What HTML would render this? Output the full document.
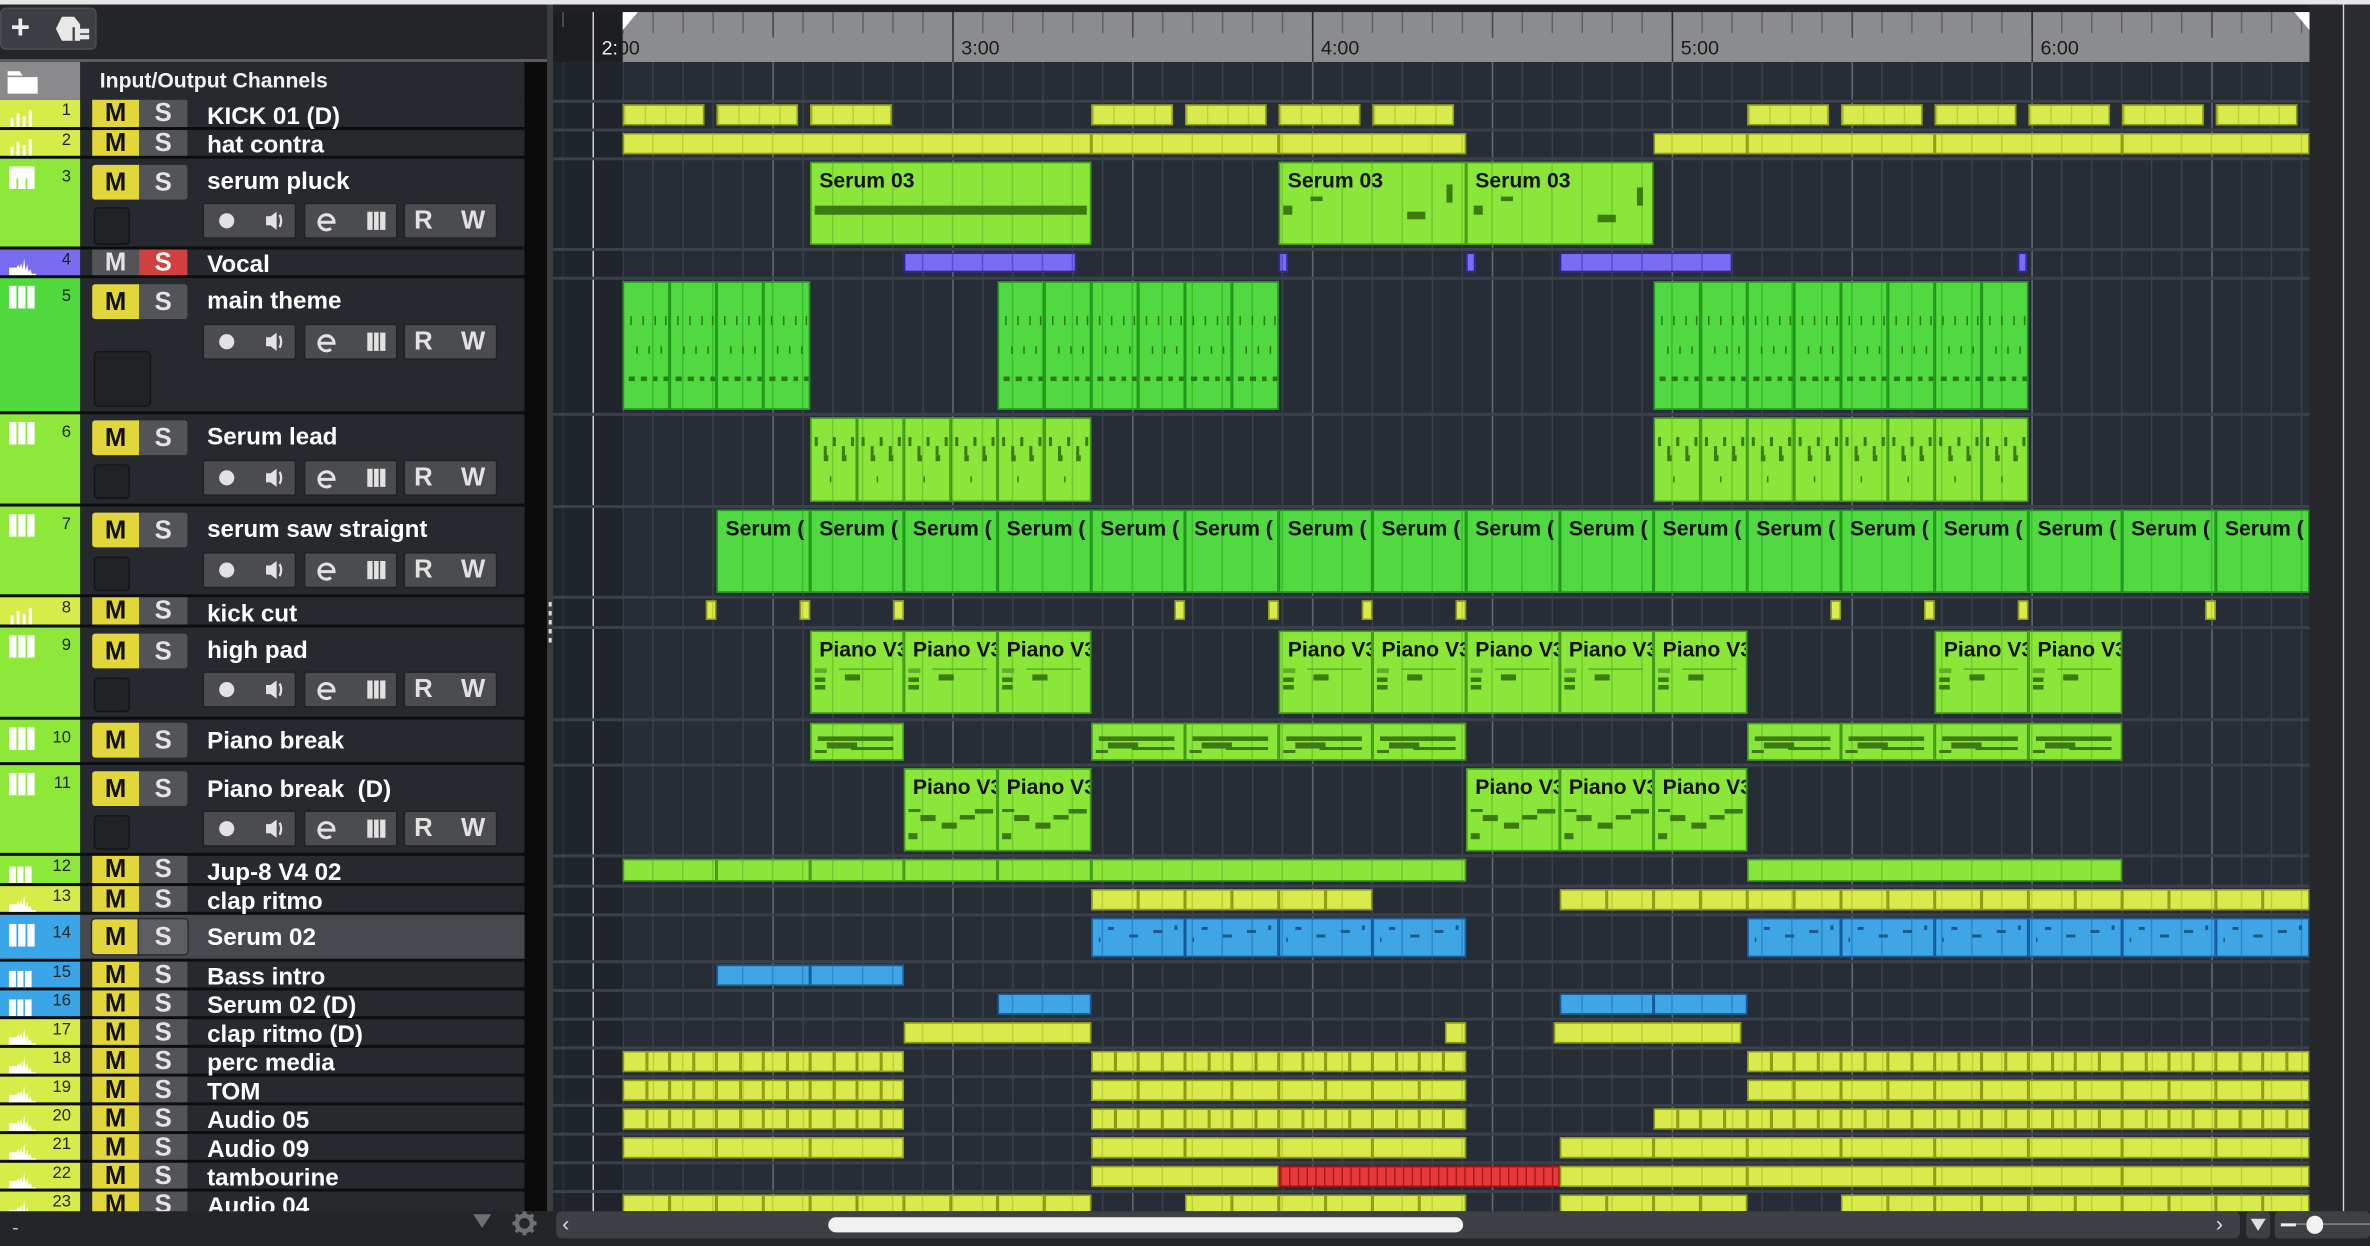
<!DOCTYPE html>
<html><head><meta charset="utf-8">
<style>
body{margin:0;width:2370px;height:1246px;overflow:hidden;background:#1e2023}
#app{position:absolute;left:0;top:0;width:1568px;height:824px;transform:scale(1.51148,1.51214);transform-origin:0 0;font-family:"Liberation Sans",sans-serif;background:#222428;overflow:hidden}
.a{position:absolute}
.r{position:absolute;left:0;width:347px;background:#26292d;border-bottom:2px solid #0c0d0f;box-sizing:border-box}
.st{position:absolute;left:0;top:0;bottom:0;width:53px}
.yl{background:#d6ec48}.lm{background:#8ee83a}.gr{background:#4fd93d}.pu{background:#7a6cf0}.bl{background:#3ba6e7}
.n{position:absolute;right:300px;top:1px;font-size:11px;color:#222;width:20px;text-align:right}
.M,.S{position:absolute;top:0;bottom:0;font-weight:bold;font-size:17px;text-align:center;display:flex;align-items:center;justify-content:center}
.M{left:61px;width:31px;background:#e3d63a;color:#111}
.S{left:92px;width:32px;background:#525458;color:#e4e4e4}
.M.off{background:#525458;color:#e4e4e4}.S.red{background:#d04040;color:#fff}
.big .M,.big .S{top:4px;bottom:auto;height:23px}
.big .M{border-radius:2px 0 0 2px}.big .S{border-radius:0 2px 2px 0}
.nm{position:absolute;left:137px;top:2px;font-weight:bold;font-size:16px;color:#fff;white-space:nowrap}
.g{position:absolute;height:24px;width:62px;background:#4a4c50;border-radius:2px;border:1px solid #1f2124;box-sizing:border-box}
.g b,.g svg{position:absolute;top:0}
.g b{font-size:17px;color:#e2e2e2;line-height:22px}
.bx{position:absolute;left:62px;width:24px;border:1.5px solid #131416;border-radius:3px;background:#202226;box-sizing:border-box}
.ic{position:absolute;left:6px}
.c{position:absolute;box-sizing:border-box;border:1.3px solid;overflow:hidden;background-size:19.833px 100%}
.y{background-color:#d8ea4c;border-color:#8e9a14;background-image:linear-gradient(90deg,#bfd034 0 1px,transparent 1px)}
.k{background-size:13.5px 100%!important}
.l{background-color:#8be63a;border-color:#3e9a18;background-image:linear-gradient(90deg,#72c82c 0 1px,transparent 1px)}
.G{background-color:#50d940;border-color:#1f961c;background-image:linear-gradient(90deg,#3abb30 0 1px,transparent 1px)}
.B{background-color:#3fa6e6;border-color:#18589a;background-image:linear-gradient(90deg,#2a88cc 0 1px,transparent 1px)}
.P{background-color:#7b6cf0;border-color:#2e22a8;background-image:linear-gradient(90deg,#5a4bd0 0 1px,transparent 1px)}
.Rd{background-color:#e8393a;border-color:#9c1212;background-image:linear-gradient(90deg,#a81818 0 1px,transparent 1px)!important;background-size:5.8px 100%!important}
.t{font-weight:bold;font-size:14px;color:#111;white-space:nowrap;padding:4px 0 0 5px;line-height:14px}
.d{position:absolute;background:#3d7a12}
</style></head><body><div id="app">
<div class="a" style="left:0;top:0;width:1568px;height:3px;background:#e6e6e6"></div>
<div class="a" style="left:0;top:3px;width:362px;height:38px;background:#232529"></div>
<div class="a" style="left:0;top:5px;width:64px;height:28px;background:#3b3e43;border:1px solid #4b4e53;border-radius:4px;box-sizing:border-box"></div>
<div class="a" style="left:7px;top:7px;font-size:22px;font-weight:bold;color:#eee;line-height:22px">+</div>
<svg class="a" style="left:37px;top:11px" width="24" height="16" viewBox="0 0 24 16"><path d="M4 0h8l4 5v11H4L0 8z" fill="#e8e8e8"/><rect x="12" y="8" width="10" height="3" fill="#e8e8e8"/><rect x="12" y="12" width="10" height="3" fill="#e8e8e8"/><rect x="11" y="7" width="1.5" height="9" fill="#3b3e43"/></svg>
<div class="a" style="left:0;top:39px;width:362px;height:2px;background:#5a5c60"></div>
<div class="a" style="left:0;top:41px;width:347px;height:25px;background:#26292d;border-bottom:1px solid #0c0d0f"></div>
<div class="a" style="left:0;top:41px;width:53px;height:25px;background:#8a8a8c"></div>
<svg class="a" style="left:5px;top:47px" width="20" height="15"><path d="M0 0h8l2 3h-10z M0 4h20v11H0z" fill="#fff"/></svg>
<div class="a" style="left:66px;top:45px;font-size:14px;font-weight:bold;color:#f2f2f2">Input/Output Channels</div>
<div class="a" style="left:347px;top:41px;width:15px;height:760px;background:#0b0b0c"></div>
<div class="a" style="left:362px;top:3px;width:4px;height:800px;background:#3a3d42"></div>
<div class="a" style="left:363px;top:398px;width:2px;height:28px;background:repeating-linear-gradient(#ddd 0 3px,transparent 3px 6px)"></div>

<div class="r" style="top:66px;height:20px"><div class="st yl"></div><span class="n">1</span><svg class="ic" style="top:6px" width="17" height="12"><path d="M1 6h2v6H1zM5 3h2v9H5zM9 5h2v7H9zM13 1h2v11h-2z" fill="#fff"/></svg><div class="M">M</div><div class="S">S</div><div class="nm" style="top:3px">KICK 01 (D)</div></div>
<div class="r" style="top:86px;height:19px"><div class="st yl"></div><span class="n">2</span><svg class="ic" style="top:5px" width="17" height="12"><path d="M1 6h2v6H1zM5 3h2v9H5zM9 5h2v7H9zM13 1h2v11h-2z" fill="#fff"/></svg><div class="M">M</div><div class="S">S</div><div class="nm">hat contra</div></div>
<div class="r big" style="top:105px;height:60px"><div class="st lm"></div><span class="n" style="top:6px">3</span><svg class="ic" style="top:5px" width="17" height="15"><path d="M0 0h17v15H0z" fill="#fff"/><path d="M5.5 0v15M11.5 0v15" stroke="#8ee83a" stroke-width="1.2"/><path d="M4 0h3v8H4zM10 0h3v8h-3z" fill="#fff"/></svg><div class="M">M</div><div class="S">S</div><div class="nm" style="top:7px">serum pluck</div>
<div class="bx" style="top:32px;height:25px"></div>
<div class="g" style="left:134px;top:29px"><svg width="62" height="22"><circle cx="15" cy="11" r="5" fill="#e2e2e2"/><path d="M41 8h3l4-3v12l-4-3h-3z" fill="#e2e2e2"/><path d="M50 7q2 4 0 8" stroke="#e2e2e2" stroke-width="1.5" fill="none"/></svg></div>
<div class="g" style="left:201px;top:29px"><svg width="62" height="22"><path d="M9 12h10a5 5 0 1 0-2 4" stroke="#e2e2e2" stroke-width="2" fill="none"/><path d="M41 5h12v12H41z" fill="#e2e2e2"/><path d="M45 5v12M49 5v12" stroke="#4a4c50"/></svg></div>
<div class="g" style="left:267px;top:29px"><b style="left:6px">R</b><b style="left:37px">W</b></div></div>
<div class="r" style="top:165px;height:19px"><div class="st pu"></div><span class="n">4</span><svg class="ic" style="top:5px" width="18" height="12"><path d="M0 12h18v-1h-3l-1-3-1 2-1-5-1 4-1-8-1 7-1-4-1 3-1-2-1 2H0z" fill="#fff"/></svg><div class="M off">M</div><div class="S red">S</div><div class="nm">Vocal</div></div>
<div class="r big" style="top:184px;height:90px"><div class="st gr"></div><span class="n" style="top:6px">5</span><svg class="ic" style="top:5px" width="17" height="15"><path d="M0 0h17v15H0z" fill="#fff"/><path d="M5.5 0v15M11.5 0v15" stroke="#4fd93d" stroke-width="1.2"/></svg><div class="M">M</div><div class="S">S</div><div class="nm" style="top:7px">main theme</div>
<div class="bx" style="top:48px;height:37px;width:38px"></div>
<div class="g" style="left:134px;top:30px"><svg width="62" height="22"><circle cx="15" cy="11" r="5" fill="#e2e2e2"/><path d="M41 8h3l4-3v12l-4-3h-3z" fill="#e2e2e2"/><path d="M50 7q2 4 0 8" stroke="#e2e2e2" stroke-width="1.5" fill="none"/></svg></div>
<div class="g" style="left:201px;top:30px"><svg width="62" height="22"><path d="M9 12h10a5 5 0 1 0-2 4" stroke="#e2e2e2" stroke-width="2" fill="none"/><path d="M41 5h12v12H41z" fill="#e2e2e2"/><path d="M45 5v12M49 5v12" stroke="#4a4c50"/></svg></div>
<div class="g" style="left:267px;top:30px"><b style="left:6px">R</b><b style="left:37px">W</b></div></div>
<div class="r big" style="top:274px;height:61px"><div class="st lm"></div><span class="n" style="top:6px">6</span><svg class="ic" style="top:5px" width="17" height="15"><path d="M0 0h17v15H0z" fill="#fff"/><path d="M5.5 0v15M11.5 0v15" stroke="#8ee83a" stroke-width="1.2"/></svg><div class="M">M</div><div class="S">S</div><div class="nm" style="top:7px">Serum lead</div>
<div class="bx" style="top:33px;height:23px"></div>
<div class="g" style="left:134px;top:30px"><svg width="62" height="22"><circle cx="15" cy="11" r="5" fill="#e2e2e2"/><path d="M41 8h3l4-3v12l-4-3h-3z" fill="#e2e2e2"/><path d="M50 7q2 4 0 8" stroke="#e2e2e2" stroke-width="1.5" fill="none"/></svg></div>
<div class="g" style="left:201px;top:30px"><svg width="62" height="22"><path d="M9 12h10a5 5 0 1 0-2 4" stroke="#e2e2e2" stroke-width="2" fill="none"/><path d="M41 5h12v12H41z" fill="#e2e2e2"/><path d="M45 5v12M49 5v12" stroke="#4a4c50"/></svg></div>
<div class="g" style="left:267px;top:30px"><b style="left:6px">R</b><b style="left:37px">W</b></div></div>
<div class="r big" style="top:335px;height:60px"><div class="st lm"></div><span class="n" style="top:6px">7</span><svg class="ic" style="top:5px" width="17" height="15"><path d="M0 0h17v15H0z" fill="#fff"/><path d="M5.5 0v15M11.5 0v15" stroke="#8ee83a" stroke-width="1.2"/></svg><div class="M">M</div><div class="S">S</div><div class="nm" style="top:7px">serum saw straignt</div>
<div class="bx" style="top:33px;height:23px"></div>
<div class="g" style="left:134px;top:30px"><svg width="62" height="22"><circle cx="15" cy="11" r="5" fill="#e2e2e2"/><path d="M41 8h3l4-3v12l-4-3h-3z" fill="#e2e2e2"/><path d="M50 7q2 4 0 8" stroke="#e2e2e2" stroke-width="1.5" fill="none"/></svg></div>
<div class="g" style="left:201px;top:30px"><svg width="62" height="22"><path d="M9 12h10a5 5 0 1 0-2 4" stroke="#e2e2e2" stroke-width="2" fill="none"/><path d="M41 5h12v12H41z" fill="#e2e2e2"/><path d="M45 5v12M49 5v12" stroke="#4a4c50"/></svg></div>
<div class="g" style="left:267px;top:30px"><b style="left:6px">R</b><b style="left:37px">W</b></div></div>
<div class="r" style="top:395px;height:20px"><div class="st yl"></div><span class="n">8</span><svg class="ic" style="top:6px" width="17" height="12"><path d="M1 6h2v6H1zM5 3h2v9H5zM9 5h2v7H9zM13 1h2v11h-2z" fill="#fff"/></svg><div class="M">M</div><div class="S">S</div><div class="nm" style="top:3px">kick cut</div></div>
<div class="r big" style="top:415px;height:61px"><div class="st lm"></div><span class="n" style="top:6px">9</span><svg class="ic" style="top:5px" width="17" height="15"><path d="M0 0h17v15H0z" fill="#fff"/><path d="M5.5 0v15M11.5 0v15" stroke="#8ee83a" stroke-width="1.2"/></svg><div class="M">M</div><div class="S">S</div><div class="nm" style="top:7px">high pad</div>
<div class="bx" style="top:33px;height:23px"></div>
<div class="g" style="left:134px;top:29px"><svg width="62" height="22"><circle cx="15" cy="11" r="5" fill="#e2e2e2"/><path d="M41 8h3l4-3v12l-4-3h-3z" fill="#e2e2e2"/><path d="M50 7q2 4 0 8" stroke="#e2e2e2" stroke-width="1.5" fill="none"/></svg></div>
<div class="g" style="left:201px;top:29px"><svg width="62" height="22"><path d="M9 12h10a5 5 0 1 0-2 4" stroke="#e2e2e2" stroke-width="2" fill="none"/><path d="M41 5h12v12H41z" fill="#e2e2e2"/><path d="M45 5v12M49 5v12" stroke="#4a4c50"/></svg></div>
<div class="g" style="left:267px;top:29px"><b style="left:6px">R</b><b style="left:37px">W</b></div></div>
<div class="r big" style="top:476px;height:30px"><div class="st lm"></div><span class="n" style="top:6px">10</span><svg class="ic" style="top:5px" width="17" height="15"><path d="M0 0h17v15H0z" fill="#fff"/><path d="M5.5 0v15M11.5 0v15" stroke="#8ee83a" stroke-width="1.2"/></svg><div class="M" style="top:2px">M</div><div class="S" style="top:2px">S</div><div class="nm" style="top:6px">Piano break</div></div>
<div class="r big" style="top:506px;height:60px"><div class="st lm"></div><span class="n" style="top:6px">11</span><svg class="ic" style="top:5px" width="17" height="15"><path d="M0 0h17v15H0z" fill="#fff"/><path d="M5.5 0v15M11.5 0v15" stroke="#8ee83a" stroke-width="1.2"/></svg><div class="M">M</div><div class="S">S</div><div class="nm" style="top:8px">Piano break&nbsp; (D)</div>
<div class="bx" style="top:33px;height:23px"></div>
<div class="g" style="left:134px;top:30px"><svg width="62" height="22"><circle cx="15" cy="11" r="5" fill="#e2e2e2"/><path d="M41 8h3l4-3v12l-4-3h-3z" fill="#e2e2e2"/><path d="M50 7q2 4 0 8" stroke="#e2e2e2" stroke-width="1.5" fill="none"/></svg></div>
<div class="g" style="left:201px;top:30px"><svg width="62" height="22"><path d="M9 12h10a5 5 0 1 0-2 4" stroke="#e2e2e2" stroke-width="2" fill="none"/><path d="M41 5h12v12H41z" fill="#e2e2e2"/><path d="M45 5v12M49 5v12" stroke="#4a4c50"/></svg></div>
<div class="g" style="left:267px;top:30px"><b style="left:6px">R</b><b style="left:37px">W</b></div></div>
<div class="r" style="top:566px;height:20px"><div class="st lm"></div><span class="n">12</span><svg class="ic" style="top:7px" width="15" height="11"><path d="M0 0h15v11H0z" fill="#fff"/><path d="M5 0v11M10 0v11" stroke="#8ee83a"/></svg><div class="M">M</div><div class="S">S</div><div class="nm" style="top:3px">Jup-8 V4 02</div></div>
<div class="r" style="top:586px;height:19px"><div class="st yl"></div><span class="n">13</span><svg class="ic" style="top:5px" width="18" height="12"><path d="M0 12h18v-1h-3l-1-3-1 2-1-5-1 4-1-8-1 7-1-4-1 3-1-2-1 2H0z" fill="#fff"/></svg><div class="M">M</div><div class="S">S</div><div class="nm">clap ritmo</div></div>
<div class="r big" style="top:605px;height:31px;background:#46494e"><div class="st bl"></div><span class="n" style="top:6px">14</span><svg class="ic" style="top:6px" width="17" height="15"><path d="M0 0h17v15H0z" fill="#fff"/><path d="M5.5 0v15M11.5 0v15" stroke="#3ba6e7" stroke-width="1.2"/></svg><div class="M" style="top:3px;box-shadow:0 0 0 1px #2a2c30">M</div><div class="S" style="top:3px;background:#5c5e62;box-shadow:0 0 0 1px #2a2c30">S</div><div class="nm" style="top:7px">Serum 02</div></div>
<div class="r" style="top:636px;height:19px"><div class="st bl"></div><span class="n">15</span><svg class="ic" style="top:6px" width="15" height="11"><path d="M0 0h15v11H0z" fill="#fff"/><path d="M5 0v11M10 0v11" stroke="#3ba6e7"/></svg><div class="M">M</div><div class="S">S</div><div class="nm">Bass intro</div></div>
<div class="r" style="top:655px;height:19px"><div class="st bl"></div><span class="n">16</span><svg class="ic" style="top:6px" width="15" height="11"><path d="M0 0h15v11H0z" fill="#fff"/><path d="M5 0v11M10 0v11" stroke="#3ba6e7"/></svg><div class="M">M</div><div class="S">S</div><div class="nm">Serum 02 (D)</div></div>
<div class="r" style="top:674px;height:19px"><div class="st yl"></div><span class="n">17</span><svg class="ic" style="top:5px" width="18" height="12"><path d="M0 12h18v-1h-3l-1-3-1 2-1-5-1 4-1-8-1 7-1-4-1 3-1-2-1 2H0z" fill="#fff"/></svg><div class="M">M</div><div class="S">S</div><div class="nm">clap ritmo (D)</div></div>
<div class="r" style="top:693px;height:19px"><div class="st yl"></div><span class="n">18</span><svg class="ic" style="top:5px" width="18" height="12"><path d="M0 12h18v-1h-3l-1-3-1 2-1-5-1 4-1-8-1 7-1-4-1 3-1-2-1 2H0z" fill="#fff"/></svg><div class="M">M</div><div class="S">S</div><div class="nm">perc media</div></div>
<div class="r" style="top:712px;height:19px"><div class="st yl"></div><span class="n">19</span><svg class="ic" style="top:5px" width="18" height="12"><path d="M0 12h18v-1h-3l-1-3-1 2-1-5-1 4-1-8-1 7-1-4-1 3-1-2-1 2H0z" fill="#fff"/></svg><div class="M">M</div><div class="S">S</div><div class="nm">TOM</div></div>
<div class="r" style="top:731px;height:19px"><div class="st yl"></div><span class="n">20</span><svg class="ic" style="top:5px" width="18" height="12"><path d="M0 12h18v-1h-3l-1-3-1 2-1-5-1 4-1-8-1 7-1-4-1 3-1-2-1 2H0z" fill="#fff"/></svg><div class="M">M</div><div class="S">S</div><div class="nm">Audio 05</div></div>
<div class="r" style="top:750px;height:19px"><div class="st yl"></div><span class="n">21</span><svg class="ic" style="top:5px" width="18" height="12"><path d="M0 12h18v-1h-3l-1-3-1 2-1-5-1 4-1-8-1 7-1-4-1 3-1-2-1 2H0z" fill="#fff"/></svg><div class="M">M</div><div class="S">S</div><div class="nm">Audio 09</div></div>
<div class="r" style="top:769px;height:19px"><div class="st yl"></div><span class="n">22</span><svg class="ic" style="top:5px" width="18" height="12"><path d="M0 12h18v-1h-3l-1-3-1 2-1-5-1 4-1-8-1 7-1-4-1 3-1-2-1 2H0z" fill="#fff"/></svg><div class="M">M</div><div class="S">S</div><div class="nm">tambourine</div></div>
<div class="r" style="top:788px;height:19px"><div class="st yl"></div><span class="n">23</span><svg class="ic" style="top:5px" width="18" height="12"><path d="M0 12h18v-1h-3l-1-3-1 2-1-5-1 4-1-8-1 7-1-4-1 3-1-2-1 2H0z" fill="#fff"/></svg><div class="M">M</div><div class="S">S</div><div class="nm">Audio 04</div></div>

<div class="a" style="left:366px;top:3px;width:1162px;height:5px;background:#1f2125"></div>
<div class="a" style="left:366px;top:8px;width:46px;height:33px;background:#1c1e22"></div>
<div class="a" style="left:412px;top:8px;width:1116px;height:33px;background:#8b8c8f;background-image:linear-gradient(90deg,#606165 0 1px,transparent 1px);background-size:19.833px 14px;background-repeat:repeat-x;background-position:19.67px 0"></div>
<div class="a" style="left:412px;top:8px;width:0;height:0;border-top:12px solid #fff;border-right:10px solid transparent"></div>
<div class="a" style="left:1518px;top:8px;width:0;height:0;border-top:12px solid #fff;border-left:10px solid transparent"></div>
<div class="a" style="left:630px;top:8px;width:1px;height:33px;background:#2c2d30"></div>
<div class="a" style="left:868px;top:8px;width:1px;height:33px;background:#2c2d30"></div>
<div class="a" style="left:1106px;top:8px;width:1px;height:33px;background:#2c2d30"></div>
<div class="a" style="left:1344px;top:8px;width:1px;height:33px;background:#2c2d30"></div>
<div class="a" style="left:511px;top:8px;width:1px;height:17px;background:#4a4b4e"></div>
<div class="a" style="left:749px;top:8px;width:1px;height:17px;background:#4a4b4e"></div>
<div class="a" style="left:987px;top:8px;width:1px;height:17px;background:#4a4b4e"></div>
<div class="a" style="left:1225px;top:8px;width:1px;height:17px;background:#4a4b4e"></div>
<div class="a" style="left:1463px;top:8px;width:1px;height:17px;background:#4a4b4e"></div>
<div class="a" style="left:372px;top:8px;width:1px;height:10px;background:#55575b"></div>
<div class="a" style="left:398px;top:24px;font-size:13px;color:#1a1a1a"><span style="color:#eee">2:</span>00</div>
<div class="a" style="left:636px;top:24px;font-size:13px;color:#1a1a1a">3:00</div>
<div class="a" style="left:874px;top:24px;font-size:13px;color:#1a1a1a">4:00</div>
<div class="a" style="left:1112px;top:24px;font-size:13px;color:#1a1a1a">5:00</div>
<div class="a" style="left:1350px;top:24px;font-size:13px;color:#1a1a1a">6:00</div>
<div class="a" style="left:1528px;top:3px;width:22px;height:798px;background:#25272b"></div>
<div class="a" style="left:1550px;top:3px;width:1.3px;height:798px;background:#d8d8d8"></div>
<div class="a" style="left:1551px;top:3px;width:17px;height:798px;background:#2a2c30"></div>
<div id="grid" class="a" style="left:366px;top:41px;width:1162px;height:760px;background-color:#272d37;background-image:linear-gradient(90deg,#62666d 0 1px,transparent 1px),linear-gradient(90deg,#3a404a 0 1px,transparent 1px);background-size:119px 100%,19.833px 100%;background-position:26px 0,6.17px 0"></div>
<div class="a" style="left:366px;top:41px;width:46px;height:760px;background:rgba(20,22,25,.35)"></div>
<div class="a" style="left:391.5px;top:8px;width:1.2px;height:793px;background:#cfcfcf"></div>
<div id="L" class="a" style="left:0;top:0;width:1528px;height:801px;overflow:hidden">
<div class="c l" style="left:536px;top:107px;width:186px;height:55px"><div class="t">Serum 03</div><i class="d" style="left:2px;top:28px;width:180px;height:6px"></i></div>
<div class="c l" style="left:846px;top:107px;width:124px;height:55px"><div class="t">Serum 03</div><i class="d" style="left:2px;top:28px;width:6px;height:6px"></i><i class="d" style="left:20px;top:22px;width:8px;height:3px"></i><i class="d" style="left:84px;top:32px;width:12px;height:5px"></i><i class="d" style="left:110px;top:14px;width:4px;height:12px"></i></div>
<div class="c l" style="left:970px;top:107px;width:124px;height:55px"><div class="t">Serum 03</div><i class="d" style="left:4px;top:28px;width:6px;height:6px"></i><i class="d" style="left:22px;top:22px;width:8px;height:3px"></i><i class="d" style="left:86px;top:34px;width:12px;height:5px"></i><i class="d" style="left:112px;top:16px;width:4px;height:12px"></i></div>
<div class="c G" style="left:474px;top:337px;width:62px;height:55px"><div class="t">Serum (</div></div>
<div class="c G" style="left:536px;top:337px;width:62px;height:55px"><div class="t">Serum (</div></div>
<div class="c G" style="left:598px;top:337px;width:62px;height:55px"><div class="t">Serum (</div></div>
<div class="c G" style="left:660px;top:337px;width:62px;height:55px"><div class="t">Serum (</div></div>
<div class="c G" style="left:722px;top:337px;width:62px;height:55px"><div class="t">Serum (</div></div>
<div class="c G" style="left:784px;top:337px;width:62px;height:55px"><div class="t">Serum (</div></div>
<div class="c G" style="left:846px;top:337px;width:62px;height:55px"><div class="t">Serum (</div></div>
<div class="c G" style="left:908px;top:337px;width:62px;height:55px"><div class="t">Serum (</div></div>
<div class="c G" style="left:970px;top:337px;width:62px;height:55px"><div class="t">Serum (</div></div>
<div class="c G" style="left:1032px;top:337px;width:62px;height:55px"><div class="t">Serum (</div></div>
<div class="c G" style="left:1094px;top:337px;width:62px;height:55px"><div class="t">Serum (</div></div>
<div class="c G" style="left:1156px;top:337px;width:62px;height:55px"><div class="t">Serum (</div></div>
<div class="c G" style="left:1218px;top:337px;width:62px;height:55px"><div class="t">Serum (</div></div>
<div class="c G" style="left:1280px;top:337px;width:62px;height:55px"><div class="t">Serum (</div></div>
<div class="c G" style="left:1342px;top:337px;width:62px;height:55px"><div class="t">Serum (</div></div>
<div class="c G" style="left:1404px;top:337px;width:62px;height:55px"><div class="t">Serum (</div></div>
<div class="c G" style="left:1466px;top:337px;width:62px;height:55px"><div class="t">Serum (</div></div>
<div class="c l pv" style="left:536px;top:417px;width:62px;height:55px"><div class="t">Piano V3</div></div>
<div class="c l pv" style="left:598px;top:417px;width:62px;height:55px"><div class="t">Piano V3</div></div>
<div class="c l pv" style="left:660px;top:417px;width:62px;height:55px"><div class="t">Piano V3</div></div>
<div class="c l pv" style="left:846px;top:417px;width:62px;height:55px"><div class="t">Piano V3</div></div>
<div class="c l pv" style="left:908px;top:417px;width:62px;height:55px"><div class="t">Piano V3</div></div>
<div class="c l pv" style="left:970px;top:417px;width:62px;height:55px"><div class="t">Piano V3</div></div>
<div class="c l pv" style="left:1032px;top:417px;width:62px;height:55px"><div class="t">Piano V3</div></div>
<div class="c l pv" style="left:1094px;top:417px;width:62px;height:55px"><div class="t">Piano V3</div></div>
<div class="c l pv" style="left:1280px;top:417px;width:62px;height:55px"><div class="t">Piano V3</div></div>
<div class="c l pv" style="left:1342px;top:417px;width:62px;height:55px"><div class="t">Piano V3</div></div>
<div class="c l pw" style="left:598px;top:508px;width:62px;height:55px"><div class="t">Piano V3</div></div>
<div class="c l pw" style="left:660px;top:508px;width:62px;height:55px"><div class="t">Piano V3</div></div>
<div class="c l pw" style="left:970px;top:508px;width:62px;height:55px"><div class="t">Piano V3</div></div>
<div class="c l pw" style="left:1032px;top:508px;width:62px;height:55px"><div class="t">Piano V3</div></div>
<div class="c l pw" style="left:1094px;top:508px;width:62px;height:55px"><div class="t">Piano V3</div></div>
</div>

<div class="a" style="left:0;top:801px;width:1568px;height:23px;background:#232528"></div>
<div class="a" style="left:8px;top:804px;color:#bbb;font-size:13px">-</div>
<div class="a" style="left:313px;top:803px;width:0;height:0;border-top:9px solid #6e7075;border-left:6px solid transparent;border-right:6px solid transparent"></div>
<svg class="a" style="left:339px;top:801px" width="16" height="16" viewBox="0 0 16 16"><circle cx="8" cy="8" r="5" fill="none" stroke="#6e7075" stroke-width="3"/><path d="M8 0v4M8 12v4M0 8h4M12 8h4M2.3 2.3l2.8 2.8M10.9 10.9l2.8 2.8M2.3 13.7l2.8-2.8M10.9 5.1l2.8-2.8" stroke="#6e7075" stroke-width="2.5"/></svg>
<div class="a" style="left:368px;top:801px;width:1114px;height:18px;background:#3d4045;border-radius:4px"></div>
<div class="a" style="left:372px;top:801px;color:#ddd;font-size:14px">‹</div>
<div class="a" style="left:548px;top:805px;width:420px;height:10px;background:#f2f2f2;border-radius:5px"></div>
<div class="a" style="left:1466px;top:801px;color:#ddd;font-size:14px">›</div>
<div class="a" style="left:1486px;top:801px;width:16px;height:18px;background:#3d4045;border-radius:3px"></div>
<div class="a" style="left:1489px;top:806px;width:0;height:0;border-top:8px solid #ddd;border-left:5px solid transparent;border-right:5px solid transparent"></div>
<div class="a" style="left:1505px;top:801px;width:63px;height:18px;background:#3d4045;border-radius:3px"></div>
<div class="a" style="left:1509px;top:809px;width:10px;height:2px;background:#eee"></div>
<div class="a" style="left:1519px;top:809px;width:49px;height:1px;background:#888"></div>
<div class="a" style="left:1526px;top:804px;width:11px;height:12px;background:#f2f2f2;border-radius:6px"></div>
</div>
<script>
const X=s=>412+62*s;
const R=[[67,86],[86,105],[105,165],[165,184],[184,274],[274,335],[335,395],[395,415],[415,476],[476,506],[506,566],[566,586],[586,605],[605,636],[636,655],[655,674],[674,693],[693,712],[712,731],[731,750],[750,769],[769,788],[788,807]];
const L=document.getElementById('L');
function el(x,y,w,h,bg){const d=document.createElement('div');d.className='a';d.style.cssText=`left:${x}px;top:${y}px;width:${w}px;height:${h}px;background:${bg}`;L.insertBefore(d,L.firstChild);return d;}
R.forEach(r=>el(366,r[1]-1,1162,1.5,'#3b414b'));el(366,66,1162,1.5,'#3b414b');
function clip(x1,x2,r,c,t,b){t=t??R[r][0]+2;b=b??R[r][1]-3;const d=document.createElement('div');d.className='c '+c;d.style.cssText=`left:${x1}px;top:${t}px;width:${x2-x1}px;height:${b-t}px`;L.appendChild(d);return d;}
function segs(x1,x2,n,r,c){const w=(x2-x1)/n,a=[];for(let i=0;i<n;i++)a.push(clip(x1+i*w,x1+(i+1)*w,r,c));return a;}
function mark(d,x,y,w,h,col){const i=document.createElement('i');i.className='d';i.style.cssText=`left:${x}px;top:${y}px;width:${w}px;height:${h}px`+(col?`;background:${col}`:'');d.appendChild(i);}
[0,1,2,5,6,7,8,12,13,14,15,16,17].forEach(s=>clip(X(s),X(s)+54,0,'y k',69,83));
[[412,722],[722,846],[846,970],[1094,1156],[1156,1280],[1280,1404],[1404,1528]].forEach(p=>clip(p[0],p[1],1,'y',88,102));
[[598,712],[846,852],[970,976],[1032,1146],[1335,1341]].forEach(p=>clip(p[0],p[1],3,'P',167,180));
[...segs(412,536,4,4,'G'),...segs(660,846,6,4,'G'),...segs(1094,1342,8,4,'G')].forEach(d=>{
 const w=parseFloat(d.style.width);
 for(let k=0;k<4;k++){mark(d,4+k*w/4,22,1,6,'#2a7a18');mark(d,8+k*w/4,42,1,5,'#2a7a18');mark(d,3+k*w/4,62,w/4-4,3,'#2a7a18');}
});
[...segs(536,722,6,5,'l'),...segs(1094,1342,8,5,'l')].forEach(d=>{
 for(let k=0;k<5;k++){mark(d,2+k*6,12+(k%2)*6,2,6);}
 mark(d,8,24,3,4);mark(d,20,24,3,4);mark(d,12,38,1,4);
});
[467,529,591,777,839,901,963,1211,1273,1335,1459].forEach(x=>clip(x,x+7,7,'y',397,410));
document.querySelectorAll('.pv').forEach(d=>{mark(d,2,24,8,3,'#5fae28');mark(d,2,30,7,3);mark(d,2,35,7,3);mark(d,22,28,10,4);mark(d,18,24,36,1,'#5fae28');});
document.querySelectorAll('.pw').forEach(d=>{mark(d,2,26,8,2);mark(d,10,30,10,4);mark(d,24,35,10,4);mark(d,36,30,10,3);mark(d,46,26,12,3);mark(d,2,42,6,4);});
[...segs(536,598,1,9,'l'),...segs(722,970,4,9,'l'),...segs(1156,1404,4,9,'l')].forEach(d=>{mark(d,4,8,50,3);mark(d,10,12,20,4);mark(d,26,15,28,2);mark(d,2,17,8,2);});
segs(412,722,5,11,'l');clip(722,970,11,'l');clip(1156,1404,11,'l');
segs(722,908,6,12,'y');segs(1032,1528,16,12,'y');
[...segs(722,970,4,13,'B'),...segs(1156,1528,6,13,'B')].forEach(d=>{mark(d,10,5,4,2,'#1f5a8f');mark(d,24,10,6,2,'#1f5a8f');mark(d,40,7,6,2,'#1f5a8f');mark(d,4,12,1,3,'#1f5a8f');mark(d,54,4,2,3,'#1f5a8f');});
segs(474,598,2,14,'B');clip(660,722,15,'B');segs(1032,1156,2,15,'B');
clip(598,722,16,'y');clip(956,970,16,'y');clip(1028,1152,16,'y');
segs(412,598,12,17,'y');segs(722,970,16,17,'y');segs(1156,1528,24,17,'y');
segs(412,598,12,18,'y');segs(722,970,8,18,'y');segs(1156,1528,12,18,'y');
segs(412,598,12,19,'y');segs(722,970,16,19,'y');segs(1094,1528,28,19,'y');
segs(412,598,3,20,'y');segs(722,970,4,20,'y');segs(1032,1528,8,20,'y');
clip(722,846,21,'y');clip(846,1032,21,'Rd');segs(1032,1528,4,21,'y');
segs(412,722,10,22,'y');segs(784,970,6,22,'y');segs(1032,1156,4,22,'y');segs(1218,1528,10,22,'y');
document.querySelectorAll('.c').forEach(d=>{if(d.classList.contains('k')||d.classList.contains('Rd'))return;const x=parseFloat(d.style.left);const o=((15.17-x)%19.833+19.833)%19.833-1.3;d.style.backgroundPosition=o+'px 0';});
</script>
</body></html>
